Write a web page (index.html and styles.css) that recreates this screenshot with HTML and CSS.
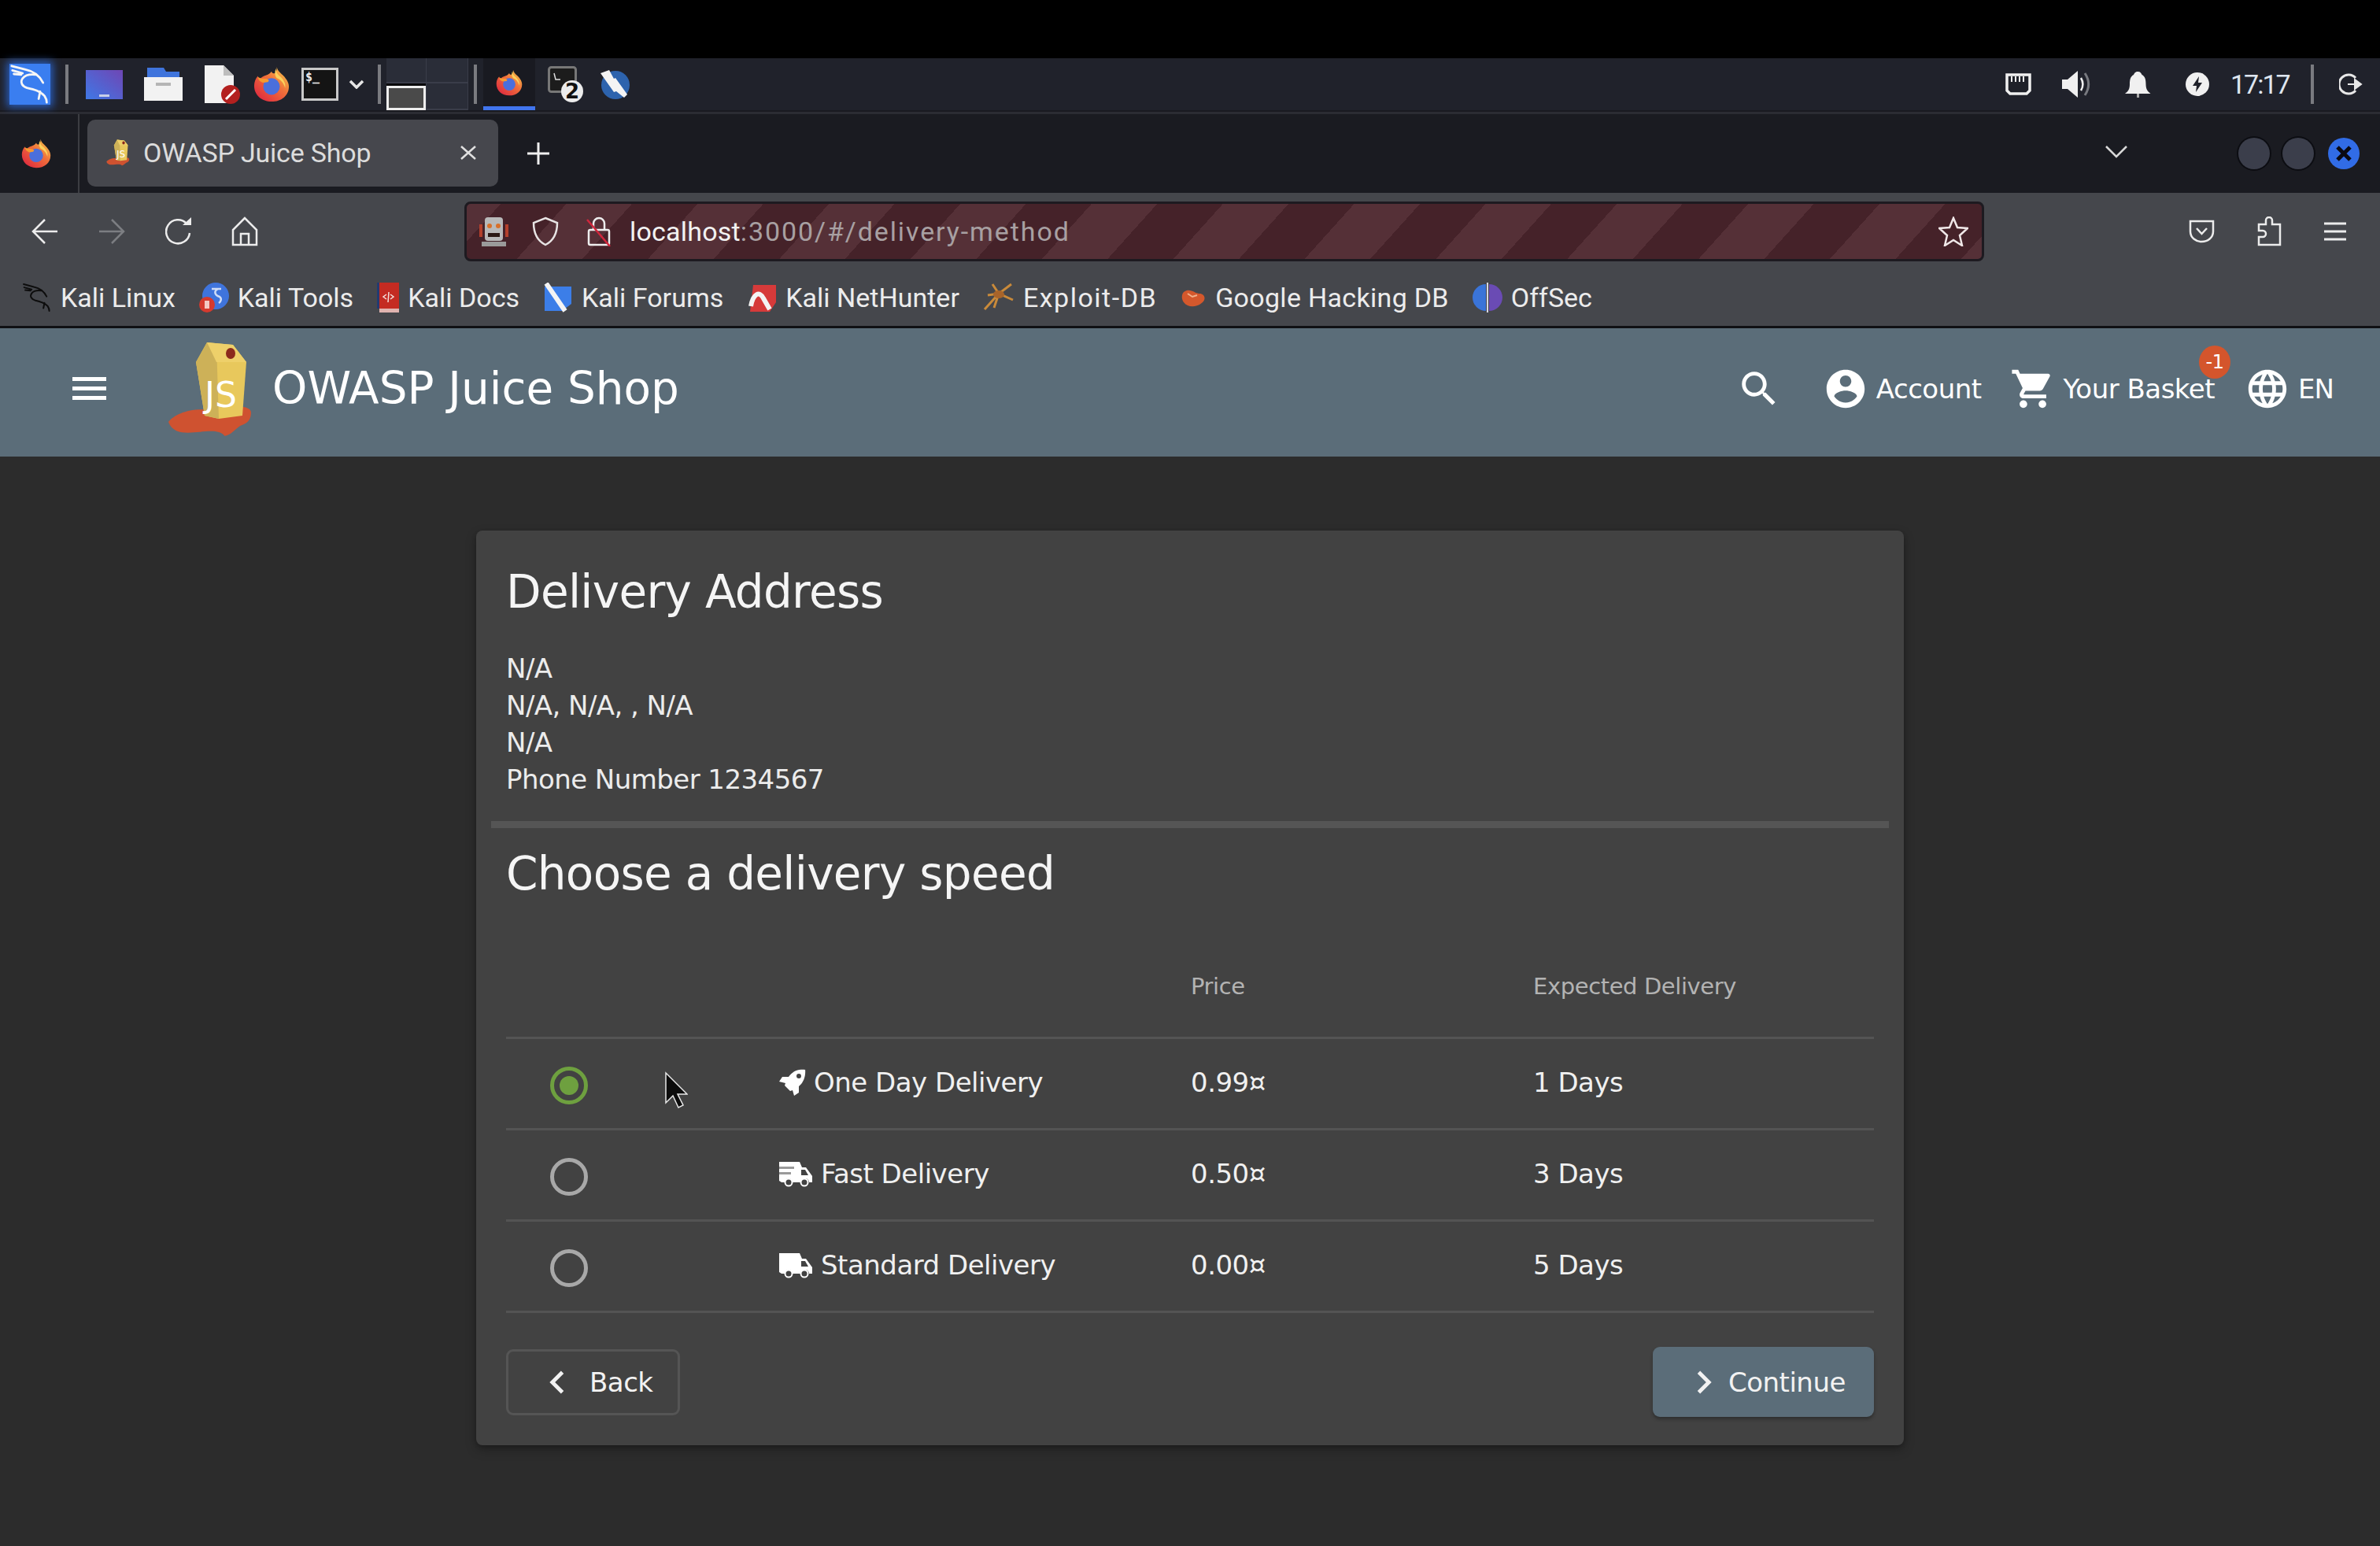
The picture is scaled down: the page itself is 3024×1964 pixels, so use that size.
FILE: index.html
```html
<!DOCTYPE html>
<html lang="en">
<head>
<meta charset="utf-8">
<title>OWASP Juice Shop</title>
<link rel="stylesheet" href="styles.css">
</head>
<body>
<svg class="defs" width="0" height="0">
  <defs>
    <linearGradient id="ffbody" x1="0.9" y1="0.1" x2="0.2" y2="0.9">
      <stop offset="0" stop-color="#f6c04a"/><stop offset="0.45" stop-color="#f0703a"/><stop offset="1" stop-color="#e0323f"/>
    </linearGradient>
    <linearGradient id="sqgrad" x1="0" y1="1" x2="1" y2="0">
      <stop offset="0" stop-color="#3f78e6"/><stop offset="1" stop-color="#6f46b4"/>
    </linearGradient>
    <symbol id="firefox" viewBox="0 0 48 48">
      <path d="M31 1c1 5 4 7 8 11 6 6 8 11 8 15 0 12-10 20-23 20S1 38 1 26c0-5 2-10 5-13 0 2 1 4 2 5 2-3 5-5 9-6 3-1 5-2 7-5 1 3 3 3 5 2 2-2 2-5 2-8z" fill="url(#ffbody)"/>
      <path d="M30 3c0 5 1 7 6 11 5 5 7 10 6 15-2-7-6-11-11-13-3-4-3-9-1-13z" fill="#fbd25c"/>
      <circle cx="24" cy="27" r="11" fill="#4a6fdc"/>
      <path d="M6 14c3 3 8 2 12 3 3 1 3 3 1 4l-6 1c-3-1-7-3-7-8z" fill="#f59a30"/>
    </symbol>
    <symbol id="dragon" viewBox="0 0 56 56">
      <g fill="none" stroke="currentColor" stroke-width="3" stroke-linecap="round" stroke-linejoin="round">
        <path d="M3 3l19 5c10 2 19 8 24 18"/>
        <path d="M4 9l14 4M6 14l10 1"/>
        <path d="M36 15c-8-1-14 0-18 5-4 6 0 11 6 13 9 2 18 4 24 11 2 3 3 6 3 9"/>
        <path d="M42 38l-2 10"/>
      </g>
    </symbol>
    <symbol id="carton" viewBox="0 0 109 123">
      <path d="M0 103c8-10 30-20 60-14 22-8 46-8 46 2 0 8-3 14-14 17-6 4-12 12-20 13-6-8-20-6-32-5-14 1-34 4-40-13z" fill="#cf5230" transform="translate(1 1) scale(.99)"/>
      <path d="M50 2l33 3 17 22-5 68-30 4-18-4-11-68z" fill="#e8c85c"/>
      <path d="M36 27L50 2l12 2 3 95-18-4z" fill="#cdb158"/>
      <path d="M50 2l33 3 17 22H62z" fill="#eed06a"/>
      <ellipse cx="80" cy="16" rx="6" ry="7" fill="#8c2a1c"/>
      <text x="47" y="84" class="js-mark">JS</text>
    </symbol>
    <symbol id="m-menu" viewBox="0 0 43 29"><path d="M0 0h43v5H0zM0 12h43v5H0zM0 24h43v5H0z" fill="currentColor"/></symbol>
    <symbol id="m-left" viewBox="0 0 24 24"><path d="M15.41 7.41L14 6l-6 6 6 6 1.41-1.41L10.83 12z" fill="currentColor"/></symbol>
    <symbol id="m-right" viewBox="0 0 24 24"><path d="M10 6L8.59 7.41 13.17 12l-4.58 4.59L10 18l6-6z" fill="currentColor"/></symbol>
    <symbol id="truck" viewBox="0 0 42 33">
      <path d="M0 1h26l3 7h5l8 11v8h-4a5 5 0 0 0-10 0H17a5 5 0 0 0-10 0H3l-3-2z" fill="currentColor"/>
      <path d="M28 11h5l4 7h-9z" fill="#424242"/>
      <circle cx="12" cy="27" r="4.500" fill="#424242" stroke="currentColor" stroke-width="2"/>
      <circle cx="32" cy="27" r="4.500" fill="#424242" stroke="currentColor" stroke-width="2"/>
    </symbol>
    <symbol id="truck-fast" viewBox="0 0 42 33">
      <use href="#truck" width="42" height="33"/>
      <path d="M0 7h19v3H0zM0 14h15v3H0z" fill="#9a9a9a"/>
    </symbol>
  </defs>
</svg>

<div class="topbar"></div>

<header class="panel">
  <div class="panel-left">
    <div class="kali-tile"><svg class="kali-glyph"><use href="#dragon"/></svg></div>
    <span class="panel-sep sep-a"></span>
    <svg class="pi-square" viewBox="0 0 47 37"><rect width="47" height="37" fill="url(#sqgrad)"/><rect x="17" y="31" width="13" height="3" fill="#c8cfe8"/></svg>
    <svg class="pi-folder" viewBox="0 0 49 42"><path d="M4 0h21l3 5h17v8H4z" fill="#3f74dc"/><path d="M0 12h49v30H0z" fill="#f2f2f2"/><rect x="15" y="19" width="19" height="4" fill="#b5b5b5"/></svg>
    <svg class="pi-doc" viewBox="0 0 45 49"><path d="M0 0h24l13 13v35H0z" fill="#f2f2f2"/><path d="M24 0l13 13H24z" fill="#bdbdbd"/><circle cx="33" cy="37" r="12" fill="#b3201f"/><path d="M27 43l12-12" stroke="#fff" stroke-width="3"/></svg>
    <svg class="pi-ff"><use href="#firefox"/></svg>
    <svg class="pi-term" viewBox="0 0 47 42"><rect x="1.500" y="1.500" width="44" height="39" fill="#141414" stroke="#c8c8c8" stroke-width="3"/><text x="5" y="17" class="term-mark">$_</text></svg>
    <svg class="pi-chev" viewBox="0 0 20 12"><path d="M2 2l8 8 8-8" fill="none" stroke="#e6e6e6" stroke-width="3.500"/></svg>
    <span class="panel-sep sep-b"></span>
    <div class="workspaces">
      <span class="ws-cell"></span><span class="ws-cell"></span>
      <span class="ws-cell ws-active"></span><span class="ws-cell"></span>
    </div>
    <span class="panel-sep sep-c"></span>
    <div class="task-active"><svg class="pi-ff-small"><use href="#firefox"/></svg></div>
    <svg class="pi-term2" viewBox="0 0 46 46"><rect x="1.500" y="1.500" width="34" height="31" rx="3" fill="#1c1c1c" stroke="#777" stroke-width="3"/><path d="M8 9l2 8h6" fill="none" stroke="#ddd" stroke-width="1.500"/><circle cx="31" cy="32" r="14" fill="#ececec"/><text x="31" y="41" class="badge-two">2</text></svg>
    <svg class="pi-kali-round" viewBox="0 0 38 38"><circle cx="20" cy="20" r="18" fill="#2d63ad"/><path d="M1 5l11-4 6 11 2-1 15 21-4 4-10-8-3 1z" fill="#f4f4f4"/></svg>
  </div>
  <div class="panel-right">
    <svg class="pi-net" viewBox="0 0 33 28"><path d="M2 2h29v20l-4 4H6l-4-4z" fill="#1f2129" stroke="#f0f0f0" stroke-width="3.500"/><path d="M8 4v7M13 4v7M18 4v7M23 4v7" stroke="#f0f0f0" stroke-width="2"/></svg>
    <svg class="pi-vol" viewBox="0 0 38 34"><path d="M0 11h7L20 0v34L7 23H0z" fill="#f0f0f0"/><path d="M24 9c3 5 3 11 0 16" fill="none" stroke="#f0f0f0" stroke-width="2.500"/><path d="M29 3c6 9 6 19 0 28" fill="none" stroke="#77797f" stroke-width="3"/></svg>
    <svg class="pi-bell" viewBox="0 0 33 33"><path d="M16.500 0c3 0 4 2 5 4 4 2 5 6 5 12 0 6 2 9 6 12H0c4-3 6-6 6-12 0-6 1-10 5-12 1-2 2-4 5.500-4z" fill="#f0f0f0"/><rect x="15" y="28" width="3" height="5" fill="#aaa"/></svg>
    <svg class="pi-power" viewBox="0 0 30 30"><circle cx="15" cy="15" r="15" fill="#f0f0f0"/><path d="M17 5l-8 12h5l-1 8 8-12h-5z" fill="#20222b"/></svg>
    <span class="clock">17:17</span>
    <span class="panel-sep sep-d"></span>
    <svg class="pi-logout" viewBox="0 0 33 28"><path d="M21 6a12 12 0 1 0 0 16" fill="none" stroke="#e8e8e8" stroke-width="3"/><path d="M11 14h14M20 8l8 6-8 6z" fill="#e8e8e8" stroke="#e8e8e8" stroke-width="2"/></svg>
  </div>
</header>
<div class="panel-rule"></div>

<div class="tabbar">
  <div class="tab-app"><svg class="tab-ff"><use href="#firefox"/></svg></div>
  <div class="tab">
    <svg class="tab-favicon"><use href="#carton"/></svg>
    <span class="tab-title">OWASP Juice Shop</span>
    <svg class="tab-close" viewBox="0 0 20 18"><path d="M1 1l18 16M19 1L1 17" stroke="#e0e0e0" stroke-width="2.500"/></svg>
  </div>
  <svg class="tab-plus" viewBox="0 0 28 28"><path d="M14 0v28M0 14h28" stroke="#f0f0f0" stroke-width="3"/></svg>
  <svg class="tab-list" viewBox="0 0 28 16"><path d="M1 1l13 13L27 1" fill="none" stroke="#d8d8d8" stroke-width="2.500"/></svg>
  <div class="win-buttons">
    <span class="win-btn"></span>
    <span class="win-btn"></span>
    <svg class="win-close" viewBox="0 0 40 40"><circle cx="20" cy="20" r="20" fill="#316ce6"/><path d="M12 12l16 16M28 12L12 28" stroke="#0a0a12" stroke-width="5"/></svg>
  </div>
</div>

<div class="toolbar">
  <div class="nav-row">
    <svg class="tb-back" viewBox="0 0 34 34"><path d="M33 17H2M17 2L2 17l15 15" fill="none" stroke="#ececec" stroke-width="2.500"/></svg>
    <svg class="tb-forward" viewBox="0 0 34 34"><path d="M1 17h31M17 2l15 15-15 15" fill="none" stroke="#7c7e82" stroke-width="2.500"/></svg>
    <svg class="tb-reload" viewBox="0 0 34 36"><path d="M27 8a15 15 0 1 0 4 12" fill="none" stroke="#ececec" stroke-width="2.500"/><path d="M22 10h11V0z" fill="#ececec"/></svg>
    <svg class="tb-home" viewBox="0 0 34 38"><path d="M17 2L2 17v19h30V17zM12 36V22h10v14" fill="none" stroke="#ececec" stroke-width="2.500"/></svg>
    <div class="urlbar">
      <svg class="url-robot" viewBox="0 0 37 38"><rect x="7" y="1" width="23" height="30" rx="4" fill="#b9b9b9"/><rect x="0" y="10" width="4" height="16" fill="#b3402c"/><rect x="33" y="10" width="4" height="16" fill="#b3402c"/><circle cx="13" cy="12" r="3" fill="#d8702a"/><circle cx="24" cy="12" r="3" fill="#d8702a"/><rect x="11" y="21" width="15" height="5" fill="#2c1a16"/><rect x="3" y="32" width="31" height="6" fill="#9a9a9a"/></svg>
      <svg class="url-shield" viewBox="0 0 34 38"><path d="M17 2l15 6c0 12-3 22-15 28C5 30 2 20 2 8z" fill="none" stroke="#e8e4e4" stroke-width="2.500"/></svg>
      <svg class="url-lock" viewBox="0 0 32 38"><path d="M9 17V9a7 7 0 0 1 14 0v8" fill="none" stroke="#eee" stroke-width="2.500"/><rect x="3" y="17" width="26" height="19" rx="2" fill="none" stroke="#eee" stroke-width="2.500"/><path d="M1 4l29 34" stroke="#d0263c" stroke-width="2.500"/></svg>
      <span class="url-text"><span class="url-host">localhost</span>:3000/#/delivery-method</span>
      <svg class="url-star" viewBox="0 0 38 38"><path d="M19 2l5 12 13 1-10 9 3 13-11-7-11 7 3-13L1 15l13-1z" fill="none" stroke="#f0e8e8" stroke-width="2.500"/></svg>
    </div>
    <svg class="tb-pocket" viewBox="0 0 33 30"><path d="M2 2h29v13c0 8-7 13-14.500 13S2 23 2 15z" fill="none" stroke="#ececec" stroke-width="2.500"/><path d="M10 11l6.500 7 6.500-7" fill="none" stroke="#ececec" stroke-width="2.500"/></svg>
    <svg class="tb-ext" viewBox="0 0 32 38"><path d="M12 10V5a4 4 0 0 1 8 0v5h10v26H3V26h5a4 4 0 0 0 0-8H3v-8z" fill="none" stroke="#ececec" stroke-width="2.500"/></svg>
    <svg class="tb-menu" viewBox="0 0 28 24"><path d="M0 2h28M0 12h28M0 22h28" stroke="#ececec" stroke-width="3"/></svg>
  </div>
  <nav class="bookmarks">
    <a class="bm"><svg class="bm-dragon"><use href="#dragon"/></svg>Kali Linux</a>
    <a class="bm"><svg class="bm-icon" viewBox="0 0 38 38"><circle cx="21" cy="17" r="17" fill="#3f74dc"/><path d="M16 8h12M24 8c-6 3-4 8 2 10 3 2 2 6-1 8" fill="none" stroke="#cfdcf6" stroke-width="2.500"/><circle cx="10" cy="28" r="10" fill="#d53a2e"/><rect x="7" y="23" width="6" height="10" fill="#f4c8c2"/></svg>Kali Tools</a>
    <a class="bm"><svg class="bm-book" viewBox="0 0 28 38"><rect x="0" y="0" width="3" height="33" fill="#233a70"/><rect x="3" y="0" width="25" height="33" fill="#c42b22"/><rect x="3" y="33" width="25" height="5" fill="#e0b4b0"/><path d="M12 15l-4 3 4 3M17 15l4 3-4 3M15 12l-1 13" fill="none" stroke="#f4e0dc" stroke-width="1.500"/></svg>Kali Docs</a>
    <a class="bm"><svg class="bm-icon" viewBox="0 0 38 38"><path d="M2 5h34v22l-12 9H2z" fill="#3c7ee8"/><path d="M4 1l24 35" stroke="#f4f4f4" stroke-width="6"/></svg>Kali Forums</a>
    <a class="bm"><svg class="bm-icon" viewBox="0 0 38 38"><path d="M8 3h29v22l-8 12H4z" fill="#d63a3a"/><path d="M5 30c3-16 11-20 16-10l8 14" fill="none" stroke="#f4f4f4" stroke-width="6"/></svg>Kali NetHunter</a>
    <a class="bm bm-wide"><svg class="bm-spider" viewBox="0 0 40 38"><path d="M2 34L20 14M20 14L36 2M20 14l18 8M20 14l-6 18M20 14L6 16M20 14L12 2" fill="none" stroke="#c98a3a" stroke-width="3"/><ellipse cx="20" cy="15" rx="7" ry="5" fill="#a8642a"/></svg>Exploit-DB</a>
    <a class="bm bm-slight"><svg class="bm-blob" viewBox="0 0 33 26"><path d="M4 6c8-6 14 2 20 2 6 0 9 6 4 11-6 6-18 8-24 0C1 15 1 9 4 6z" fill="#d4582c"/><path d="M9 8l6 4 6-2" fill="none" stroke="#f2b08a" stroke-width="2"/></svg>Google Hacking DB</a>
    <a class="bm"><svg class="bm-icon" viewBox="0 0 38 38"><path d="M17 2a17 17 0 0 0 0 34z" fill="#3a74d8"/><path d="M21 2a17 17 0 0 1 0 34z" fill="#6a4bb4"/><path d="M19 0v38" stroke="#d8d8e0" stroke-width="2"/></svg>OffSec</a>
  </nav>
</div>
<div class="toolbar-rule"></div>

<header class="app-bar">
  <svg class="app-menu"><use href="#m-menu"/></svg>
  <svg class="app-logo"><use href="#carton"/></svg>
  <span class="app-title">OWASP Juice Shop</span>
  <div class="app-actions">
    <svg class="mat mat-search" viewBox="0 0 24 24"><path d="M15.5 14h-.79l-.28-.27C15.41 12.59 16 11.11 16 9.5 16 5.91 13.09 3 9.5 3S3 5.91 3 9.5 5.91 16 9.5 16c1.61 0 3.09-.59 4.23-1.57l.27.28v.79l5 4.99L20.49 19l-4.99-5zm-6 0C7.01 14 5 11.99 5 9.5S7.01 5 9.5 5 14 7.01 14 9.5 11.99 14 9.5 14z"/></svg>
    <div class="action act-account"><svg class="mat" viewBox="0 0 24 24"><path d="M12 2C6.48 2 2 6.48 2 12s4.48 10 10 10 10-4.48 10-10S17.52 2 12 2zm0 3c1.66 0 3 1.34 3 3s-1.34 3-3 3-3-1.34-3-3 1.34-3 3-3zm0 14.2c-2.5 0-4.71-1.28-6-3.22.03-1.99 4-3.08 6-3.08 1.99 0 5.97 1.09 6 3.08-1.29 1.94-3.5 3.22-6 3.22z"/></svg><span>Account</span></div>
    <div class="action act-basket"><svg class="mat" viewBox="0 0 24 24"><path d="M7 18c-1.1 0-1.99.9-1.99 2S5.900 22 7 22s2-.9 2-2-.9-2-2-2zM1 2v2h2l3.600 7.590-1.350 2.450c-.16.280-.25.610-.25.960 0 1.100.9 2 2 2h12v-2H7.420c-.14 0-.25-.11-.25-.25l.03-.12.9-1.630h7.450c.750 0 1.410-.41 1.750-1.030l3.580-6.490c.08-.14.120-.31.120-.48 0-.55-.45-1-1-1H5.210l-.94-2H1zm16 16c-1.100 0-1.990.9-1.990 2s.89 2 1.990 2 2-.9 2-2-.9-2-2-2z"/></svg><span>Your Basket</span><b class="basket-badge">-1</b></div>
    <div class="action act-lang"><svg class="mat" viewBox="0 0 24 24"><path d="M11.990 2C6.470 2 2 6.480 2 12s4.470 10 9.990 10C17.520 22 22 17.520 22 12S17.520 2 11.990 2zm6.930 6h-2.950c-.32-1.250-.78-2.450-1.380-3.560 1.840.63 3.370 1.910 4.330 3.560zM12 4.040c.83 1.200 1.480 2.530 1.910 3.960h-3.820c.43-1.430 1.080-2.760 1.910-3.960zM4.260 14C4.100 13.360 4 12.690 4 12s.1-1.360.26-2h3.380c-.08.66-.14 1.320-.14 2 0 .68.06 1.340.14 2H4.260zm.82 2h2.950c.32 1.250.78 2.450 1.380 3.560-1.840-.63-3.370-1.900-4.330-3.560zm2.950-8H5.080c.96-1.660 2.490-2.930 4.330-3.560C8.810 5.550 8.350 6.750 8.030 8zM12 19.960c-.83-1.200-1.480-2.530-1.910-3.960h3.820c-.43 1.430-1.080 2.760-1.910 3.960zM14.340 14H9.660c-.09-.66-.16-1.320-.16-2 0-.68.07-1.350.16-2h4.680c.09.650.16 1.320.16 2 0 .68-.07 1.340-.16 2zm.25 5.560c.6-1.110 1.060-2.310 1.380-3.560h2.950c-.96 1.650-2.490 2.930-4.330 3.560zM16.360 14c.08-.66.14-1.320.14-2 0-.68-.06-1.340-.14-2h3.380c.16.640.26 1.310.26 2s-.1 1.360-.26 2h-3.380z"/></svg><span class="lang-code">EN</span></div>
  </div>
</header>

<main class="page">
  <section class="card">
    <div class="card-block">
      <h1 class="card-title">Delivery Address</h1>
      <address class="address">
        <div>N/A</div>
        <div>N/A, N/A, , N/A</div>
        <div>N/A</div>
        <div>Phone Number 1234567</div>
      </address>
    </div>
    <div class="divider"></div>
    <div class="card-block">
      <h1 class="card-title speed-title">Choose a delivery speed</h1>
      <div class="table">
        <div class="row head-row">
          <span></span><span></span><span>Price</span><span>Expected Delivery</span>
        </div>
        <div class="row">
          <span class="radio-cell"><span class="radio radio-on"></span></span>
          <span class="name"><svg class="fa-rocket" viewBox="0 0 34 34"><path d="M33 1c-9-1-16 2-21 9H4L0 16l8 2-1 3 7 7 3-1 2 7 6-4v-8c6-5 9-13 8-22z" fill="currentColor"/><circle cx="25" cy="9" r="3" fill="#424242"/></svg>One Day Delivery</span>
          <span>0.99¤</span><span>1 Days</span>
        </div>
        <div class="row">
          <span class="radio-cell"><span class="radio"></span></span>
          <span class="name name-truck"><svg class="fa-truck"><use href="#truck-fast"/></svg>Fast Delivery</span>
          <span>0.50¤</span><span>3 Days</span>
        </div>
        <div class="row">
          <span class="radio-cell"><span class="radio"></span></span>
          <span class="name name-truck"><svg class="fa-truck"><use href="#truck"/></svg>Standard Delivery</span>
          <span>0.00¤</span><span>5 Days</span>
        </div>
      </div>
      <div class="actions">
        <button class="btn btn-back"><svg class="btn-icon"><use href="#m-left"/></svg>Back</button>
        <button class="btn btn-continue"><svg class="btn-icon"><use href="#m-right"/></svg>Continue</button>
      </div>
    </div>
  </section>
</main>

<svg class="cursor" viewBox="0 0 30 48"><path d="M2 2v38l9-9 7 15 6-3-7-14h12z" fill="#0c0c0c" stroke="#e8e8e8" stroke-width="1.500"/></svg>
</body>
</html>
```

FILE: styles.css
```css
* { box-sizing: border-box; }
html, body { margin: 0; padding: 0; }
body {
  width: 3024px;
  height: 1964px;
  overflow: hidden;
  background: #2c2c2c;
  font-family: "DejaVu Sans", sans-serif;
  color: #f2f2f2;
  position: relative;
}
svg { display: block; flex: none; }
.defs { position: absolute; }
.js-mark { font: 400 44px "DejaVu Sans", sans-serif; fill: #fff; }
.term-mark { font: 700 15px "DejaVu Sans Mono", monospace; fill: #eee; }
.badge-two { font: 700 26px "DejaVu Sans", sans-serif; fill: #111; text-anchor: middle; }

.topbar { height: 74px; background: #000; }

/* desktop panel */
.panel {
  height: 66px;
  background: #20222b;
  display: flex;
  justify-content: space-between;
  align-items: center;
}
.panel-left, .panel-right { display: flex; align-items: center; height: 100%; }
.panel-sep { width: 4px; height: 50px; background: #7a7b80; flex: none; }
.sep-a { margin-left: 19px; }
.sep-b { margin-left: 17px; }
.sep-c { margin-left: 7px; }
.sep-d { margin-left: 30px; }
.kali-tile {
  width: 52px; height: 52px; margin-left: 12px;
  background: #3a7ef0;
  box-shadow: 0 0 10px 3px #2a5fc0;
  color: #f6f6f6;
}
.kali-glyph { width: 52px; height: 52px; }
.pi-square { width: 47px; height: 37px; margin-left: 22px; }
.pi-folder { width: 49px; height: 42px; margin-left: 27px; }
.pi-doc { width: 45px; height: 49px; margin-left: 28px; }
.pi-ff { width: 46px; height: 46px; margin-left: 17px; }
.pi-term { width: 47px; height: 42px; margin-left: 15px; }
.pi-chev { width: 20px; height: 12px; margin-left: 13px; }
.workspaces {
  width: 104px; height: 66px; margin-left: 7px;
  display: grid;
  grid-template-columns: 51px 53px;
  grid-template-rows: 32px 34px;
  gap: 0;
  background: #3a3d4a;
  flex: none;
}
.ws-cell { background: #2a2d38; margin: 0 1px 2px 0; }
.ws-active { background: #4a4a4a; border: 3px solid #eee; margin: 3px 1px 0 0; box-shadow: 0 -3px 0 #08080a; }
.task-active {
  width: 66px; height: 66px; margin-left: 8px;
  background: #191a21;
  border-bottom: 5px solid #4175ee;
  display: flex; align-items: center; justify-content: center;
}
.pi-ff-small { width: 34px; height: 34px; }
.pi-term2 { width: 46px; height: 46px; margin-left: 16px; }
.pi-kali-round { width: 38px; height: 38px; margin-left: 20px; }
.pi-net { width: 33px; height: 28px; }
.pi-vol { width: 38px; height: 34px; margin-left: 39px; }
.pi-bell { width: 33px; height: 33px; margin-left: 42px; }
.pi-power { width: 30px; height: 30px; margin-left: 44px; }
.clock { font: 34px "Roboto", sans-serif; color: #dfe6f0; margin-left: 27px; width: 72px; white-space: nowrap; letter-spacing: -2px; }
.pi-logout { width: 33px; height: 28px; margin-left: 32px; margin-right: 19px; }
.panel-rule { height: 5px; background: linear-gradient(#191a20 0 2px, #2b2c33 2px); }

/* browser tabs */
.tabbar {
  height: 100px;
  background: #1a1b21;
  display: flex;
  align-items: center;
  position: relative;
}
.tab-app {
  width: 101px; height: 100%;
  border-right: 2px solid #3c3d42;
  display: flex; align-items: center; justify-content: center;
  padding-right: 8px;
}
.tab-ff { width: 38px; height: 38px; }
.tab {
  width: 522px; height: 85px; margin-left: 10px; margin-top: -2px;
  background: #46474d;
  border-radius: 10px;
  display: flex; align-items: center;
  padding-left: 24px;
}
.tab-favicon { width: 30px; height: 34px; }
.tab-title { font: 34px "Roboto", sans-serif; letter-spacing: -.2px; color: #dcdcdc; margin-left: 17px; white-space: nowrap; width: 403px; }
.tab-close { width: 20px; height: 18px; }
.tab-plus { width: 28px; height: 28px; margin-left: 37px; }
.tab-list { width: 28px; height: 16px; margin-left: 1977px; margin-top: -4px; }
.win-buttons { display: flex; align-items: center; gap: 16px; margin-left: 141px; }
.win-btn { width: 40px; height: 40px; border-radius: 50%; background: #3b3e4b; box-shadow: 0 0 0 2px #0c0d12; }
.win-close { width: 40px; height: 40px; margin-left: 2px; }

/* browser toolbar */
.toolbar { height: 169px; background: #45474c; }
.nav-row { height: 98px; display: flex; align-items: center; padding-top: 0; }
.tb-back { width: 34px; height: 34px; margin-left: 40px; }
.tb-forward { width: 34px; height: 34px; margin-left: 51px; }
.tb-reload { width: 34px; height: 36px; margin-left: 51px; }
.tb-home { width: 34px; height: 38px; margin-left: 50px; }
.urlbar {
  width: 1931px; height: 76px; margin-left: 262px;
  border: 3px solid #1d1a20;
  border-radius: 8px;
  background: repeating-linear-gradient(132deg, #553037 0 32px, #452229 32px 94px, #553037 94px 124px);
  display: flex; align-items: center;
  padding-left: 16px;
}
.url-robot { width: 37px; height: 38px; }
.url-shield { width: 34px; height: 38px; margin-left: 30px; }
.url-lock { width: 32px; height: 38px; margin-left: 35px; }
.url-text { font: 34px "Roboto", sans-serif; letter-spacing: 1.900px; color: #a8a0a2; margin-left: 23px; white-space: nowrap; width: 1663px; }
.url-host { color: #f2f2f2; letter-spacing: .2px; }
.url-star { width: 38px; height: 38px; }
.tb-pocket { width: 33px; height: 30px; margin-left: 260px; }
.tb-ext { width: 32px; height: 38px; margin-left: 53px; }
.tb-menu { width: 28px; height: 24px; margin-left: 54px; }
.bookmarks {
  height: 71px;
  display: flex; align-items: center; gap: 30px;
  padding-left: 28px;
  padding-bottom: 2px;
}
.bm { display: flex; align-items: center; gap: 11px; font: 34px "Roboto", sans-serif; color: #ececec; white-space: nowrap; }
.bm-wide { letter-spacing: 1.500px; }
.bm-slight { letter-spacing: .3px; }
.bm-dragon { width: 38px; height: 38px; color: #0d0d0d; }
.bm-icon { width: 38px; height: 38px; }
.bm-book { width: 28px; height: 38px; }
.bm-spider { width: 40px; height: 38px; }
.bm-blob { width: 33px; height: 26px; }
.toolbar-rule { height: 3px; background: #101114; }

/* app bar */
.app-bar {
  height: 163px;
  background: #5b6d79;
  display: flex;
  align-items: center;
  padding-bottom: 10px;
  color: #fff;
}
.app-menu { width: 43px; height: 29px; margin-left: 92px; }
.app-logo { width: 109px; height: 123px; margin-left: 78px; margin-top: 2px; }
.app-title { font-size: 56.400px; line-height: 66px; margin-left: 24px; white-space: nowrap; }
.app-actions { margin-left: auto; padding-right: 59px; display: flex; align-items: center; }
.mat { width: 58px; height: 58px; fill: #fff; }
.action { display: flex; align-items: center; gap: 10px; font-size: 34px; letter-spacing: -.5px; white-space: nowrap; position: relative; }
.lang-code { letter-spacing: -1px; }
.act-account { margin-left: 52px; }
.act-basket { margin-left: 36px; }
.act-lang { margin-left: 38px; }
.basket-badge {
  position: absolute; right: -20px; top: -26px;
  width: 40px; height: 42px; border-radius: 50%;
  background: #d4552c;
  font: 400 24px/42px "DejaVu Sans", sans-serif;
  text-align: center; color: #fff;
}

/* page */
.page { display: flex; justify-content: center; padding-top: 94px; }
.card {
  width: 1814px;
  background: #424242;
  border-radius: 8px;
  padding: 0 19px 36px;
  box-shadow: 0 6px 14px rgba(0,0,0,.25), 0 2px 5px rgba(0,0,0,.2);
}
.card-block { padding: 0 19px; }
.card-title { margin: 0; font-weight: 400; font-size: 58px; letter-spacing: -.7px; line-height: 77px; padding-top: 40px; color: #f5f5f5; }
.speed-title { padding-top: 20px; }
.address { font-style: normal; font-size: 34px; letter-spacing: -.55px; line-height: 47px; margin-top: 35px; padding-bottom: 29px; color: #ececec; }
.divider { height: 9px; background: #555; }

.table { display: block; }
.row {
  display: grid;
  grid-template-columns: 347px 523px 435px 1fr;
  align-items: center;
  height: 116px;
  border-bottom: 3px solid #545454;
  font-size: 34px;
  letter-spacing: -.5px;
  line-height: 47px;
  color: #f0f0f0;
  padding-bottom: 3px;
}
.head-row {
  height: 171px;
  font-size: 29px;
  letter-spacing: -.4px;
  line-height: 38px;
  color: #b3b3b3;
  padding: 40px 0 0;
}
.radio-cell { display: block; padding: 7px 0 0 56px; }
.radio {
  display: flex; align-items: center; justify-content: center;
  width: 48px; height: 48px;
  border-radius: 50%;
  border: 5px solid #a8a8a8;
}
.radio-on { border-color: #6ea03f; }
.radio-on::after { content: ""; width: 24px; height: 24px; border-radius: 50%; background: #6ea03f; }
.name { display: flex; align-items: center; gap: 10px; }
.name-truck { gap: 11px; }
.fa-rocket { width: 34px; height: 34px; color: #fff; }
.fa-truck { width: 42px; height: 33px; color: #fff; }

.actions { display: flex; justify-content: space-between; align-items: center; margin-top: 43px; height: 89px; }
.btn {
  display: flex; align-items: center;
  font-family: "DejaVu Sans", sans-serif;
  font-size: 34px;
  letter-spacing: -.5px;
  color: #f2f2f2;
  border-radius: 9px;
  padding: 0;
}
.btn-icon { width: 58px; height: 58px; margin-right: 2px; }
.btn-back { width: 221px; height: 84px; background: transparent; border: 3px solid #555; padding-left: 33px; }
.btn-back .btn-icon { margin-right: 12px; }
.btn-continue {
  width: 281px; height: 89px; background: #5b6d79; border: 0; padding-left: 36px;
  box-shadow: 0 3px 4px rgba(0,0,0,.3);
}

.cursor { position: absolute; left: 844px; top: 1361px; width: 30px; height: 48px; }
```
